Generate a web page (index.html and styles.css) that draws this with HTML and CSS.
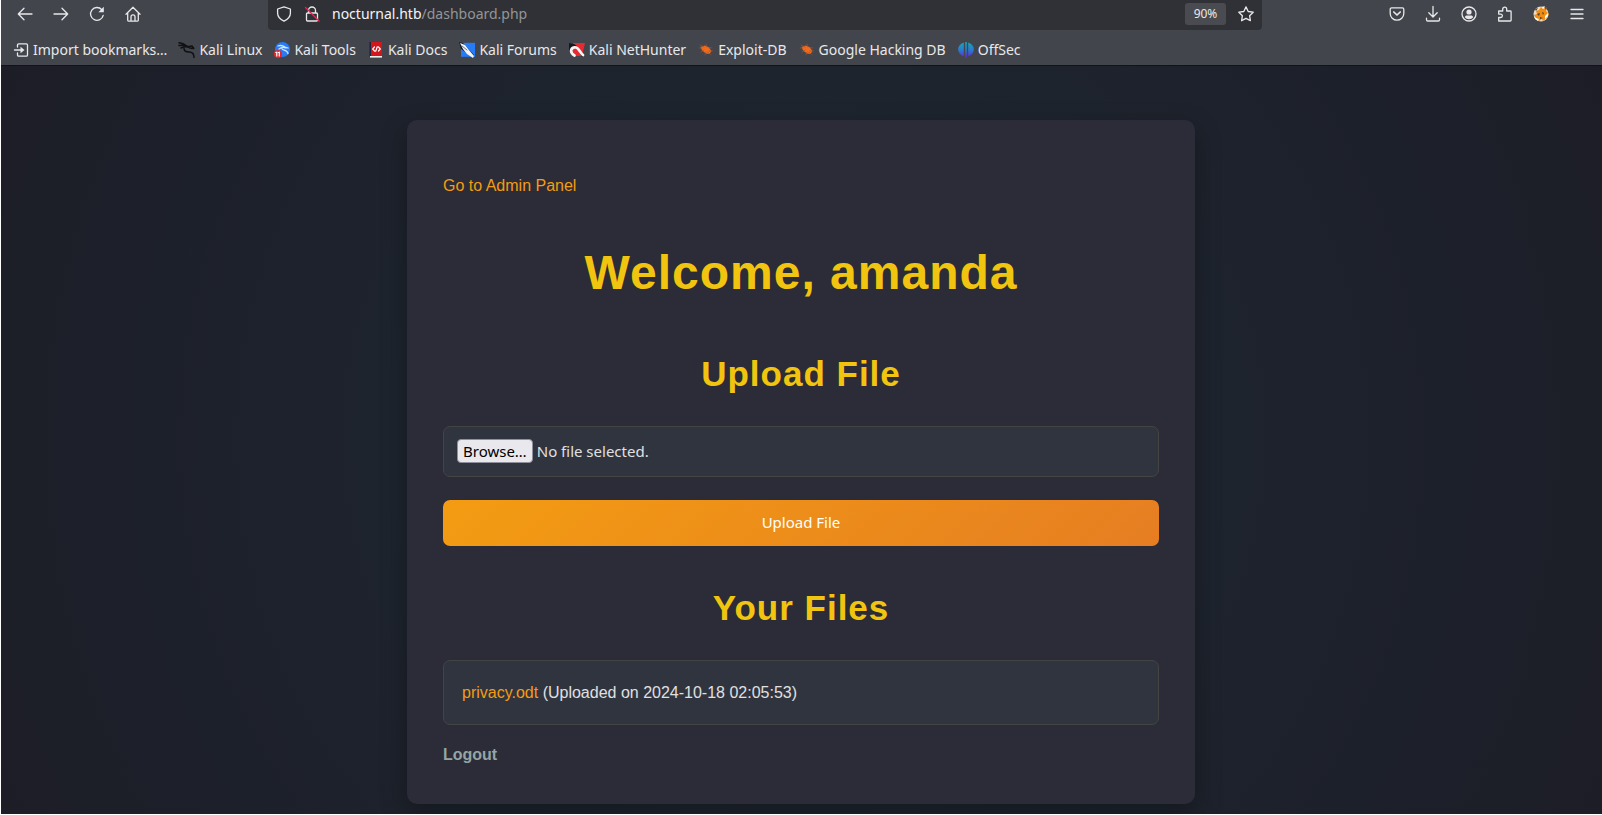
FILE: index.html
```html
<!DOCTYPE html>
<html lang="en">
<head>
<meta charset="utf-8">
<meta name="viewport" content="width=device-width, initial-scale=1">
<title>Dashboard</title>
<link rel="stylesheet" href="styles.css">
</head>
<body class="window">
<header class="chrome">
  <div class="navbar">
    <nav class="nav-buttons" aria-label="Navigation">
      <button class="tool" type="button" aria-label="Back"><svg class="icon" viewBox="0 0 16 16"><path d="M15 8H1.500M7 2.200 1.300 8 7 13.800"/></svg></button>
      <button class="tool" type="button" aria-label="Forward"><svg class="icon" viewBox="0 0 16 16"><path d="M1 8h13.500M9 2.200 14.700 8 9 13.800"/></svg></button>
      <button class="tool" type="button" aria-label="Reload"><svg class="icon" viewBox="0 0 16 16"><path d="M14.200 9.300A6.400 6.400 0 1 1 12.800 3.700"/><path class="solid" d="M14.800.8v5.400H9.400z"/></svg></button>
      <button class="tool" type="button" aria-label="Home"><svg class="icon" viewBox="0 0 16 16"><path d="M1 8.200 8 1.300l7 6.900M2.700 7v7.300c0 .5.300.8.800.8h9c.5 0 .8-.3.800-.8V7M6 15v-4.200a2 2 0 0 1 4 0V15"/></svg></button>
    </nav>
    <div class="urlbar">
      <svg class="icon" viewBox="0 0 16 16"><path d="M8 .9 14.400 3v4.300c0 3.400-2.400 6-6.400 7.900-4-1.900-6.400-4.500-6.400-7.900V3z"/></svg>
      <svg class="icon" viewBox="0 0 16 16"><path d="M4.500 7V4.500a3.500 3.500 0 0 1 7 0V7M3.500 7h9c.6 0 1 .4 1 1v6c0 .6-.4 1-1 1h-9c-.6 0-1-.4-1-1V8c0-.6.400-1 1-1z"/><path class="slash" d="M1.500 1.500 15 15"/></svg>
      <a class="address" href="#"><span class="host">nocturnal.htb</span>/dashboard.php</a>
      <button class="zoom" type="button">90%</button>
      <button class="tool" type="button" aria-label="Bookmark this page"><svg class="icon" viewBox="0 0 16 16"><path d="m8 .9 2.200 4.600 5 .7-3.600 3.500.8 5L8 12.400l-4.400 2.300.8-5L.8 6.200l5-.7z"/></svg></button>
    </div>
    <div class="nav-tools">
      <button class="tool" type="button" aria-label="Save to Pocket"><svg class="icon" viewBox="0 0 16 16"><path d="M2.600 1.800h10.800c.8 0 1.400.6 1.400 1.400v4.200a6.800 6.800 0 0 1-13.600 0V3.200c0-.8.600-1.400 1.400-1.400z"/><path d="m4.800 6 3.200 3 3.200-3" stroke-width="1.700"/></svg></button>
      <button class="tool" type="button" aria-label="Downloads"><svg class="icon" viewBox="0 0 16 16"><path d="M8 .5v10.300M3.800 6.800 8 11l4.200-4.200M1.500 12.200v1.600c0 .7.500 1.200 1.200 1.200h10.600c.7 0 1.200-.5 1.200-1.200v-1.600"/></svg></button>
      <button class="tool" type="button" aria-label="Account"><svg class="icon" viewBox="0 0 16 16"><circle cx="8" cy="8" r="7"/><circle class="solid" cx="8" cy="6" r="2.600"/><path class="solid" d="M3.800 11.300C4 10 5 9.500 6 9.500h4c1 0 2 .5 2.200 1.800-1 1.200-2.400 1.900-4.200 1.900s-3.200-.7-4.200-1.900z"/></svg></button>
      <button class="tool" type="button" aria-label="Extensions"><svg class="icon" viewBox="0 0 16 16"><path d="M1.700 15V11.500h2a1.700 1.700 0 0 0 0-3.400h-2V5h4V3.200a2 2 0 0 1 4 0V5h3.600c.5 0 .8.300.8.800V14.200c0 .5-.3.800-.8.800z"/></svg></button>
      <button class="tool" type="button" aria-label="FoxyProxy"><svg class="icon fill" viewBox="0 0 16 16"><circle cx="8" cy="8" r="7.500" fill="#e8dccb"/><path fill="#f08d13" d="m3 5 3-1 2-3 2 2 4-2-1 4 3 3-2 4-4 3-1-2-3 2-4-3-1-3 3-1z"/><path fill="#50402d" d="m4 8 3-1-1 3zm5-2 2 1-1 2zM7 11l3 1-3 1zM12 2l2-1-1 3zM2 3l3-1-2 3z"/><path fill="#fff" d="m1 10 2 2 3 1-1 2-3-2zM12 10l3-3v3l-3 3zM9 1l3-1-2 3z"/></svg></button>
      <button class="tool" type="button" aria-label="Menu"><svg class="icon" viewBox="0 0 16 16"><path d="M2 3.500h12M2 8h12M2 12.500h12"/></svg></button>
    </div>
  </div>
  <nav class="bookmarks" aria-label="Bookmarks">
    <a class="bookmark" href="#"><svg class="icon" viewBox="0 0 16 16"><path d="M4.500 5V3c0-.7.500-1.200 1.200-1.200h7.600c.7 0 1.200.5 1.200 1.200v10c0 .7-.5 1.200-1.200 1.200H5.700c-.7 0-1.200-.5-1.200-1.200v-2M1.500 8H9"/><path class="solid" d="m7.500 4.800 4 3.200-4 3.200z"/></svg>Import bookmarks…</a>
    <a class="bookmark" href="#"><svg class="icon fill" viewBox="0 0 16 16"><path fill="none" stroke="#101114" stroke-width="1.500" d="M0 .8c3 .4 5 1 7.500 3M0 3.600C3 3 6 3.300 9 4.500M2 6c3-1.700 6-1.500 8.500-.6M5 6.500C5 9.500 7 10 10 10c3.500 0 5 2 5 5.500M9 4.800l4-.8 1.800 2.500-4-.5"/></svg>Kali Linux</a>
    <a class="bookmark" href="#"><svg class="icon fill" viewBox="0 0 16 16"><circle cx="8.500" cy="7.500" r="7.500" fill="#277bf5"/><path fill="none" stroke="#cfe4ff" d="M4 4c3-1 5-.5 7 1M5 7c3-2 4-2 7-1M8 6.500c0 2.500 5 .5 6 5M11 5l3 1"/><circle cx="4" cy="12" r="4" fill="#e5262e"/><path stroke="#fff" stroke-width="1.200" d="M2.800 10v4M5.300 10v4M1.800 10.500h1M4.300 10.500h1"/></svg>Kali Tools</a>
    <a class="bookmark" href="#"><svg class="icon fill" viewBox="0 0 16 16"><path fill="#20233f" d="M1.500 0H4v14.500H1.500z"/><path fill="#d4151b" d="M3 0h11v14H3z"/><path fill="#eee" d="M2 14h12v1.600H2z"/><path fill="none" stroke="#fff" stroke-width="1.200" d="M6.500 5 4.700 7l1.800 2M10.500 5l1.800 2-1.800 2M9.300 4.700 7.700 9.300"/></svg>Kali Docs</a>
    <a class="bookmark" href="#"><svg class="icon fill" viewBox="0 0 16 16"><path fill="#267cf8" d="M2 .8h14v14H2z"/><path fill="#1b1d22" d="m0 0 4 1 11 12-1 2L2 7z"/><path fill="#f3f5f8" d="m1 1 5 2 4 5 5 6-1 2-6-4-4-5z"/><path stroke="#4c5665" stroke-width=".8" d="m3 4 5 4"/></svg>Kali Forums</a>
    <a class="bookmark" href="#"><svg class="icon fill" viewBox="0 0 16 16"><path fill="#e52a30" d="M4 1h12L13 14H3z"/><path fill="#17191d" d="m0 1 5 1 3 2-5 2-3 3zM10 10l5 4-2 1z"/><path fill="none" stroke="#f5f5f5" stroke-width="2.700" d="M5.500 13.500C1 11 1 6 5.500 5.300c4-.6 5 4.700 8.500 7.700"/></svg>Kali NetHunter</a>
    <a class="bookmark" href="#"><svg class="icon fill" viewBox="0 0 16 16"><path fill="#f26a1b" d="m2.500 5 4-1.500 4 1.500 3 4-2 3-3.500-.5-4-3z"/><path fill="none" stroke="#9a5330" stroke-width=".7" d="M1 6h3M2 3l4 2M8 2l1 3M14 6l-3-.5M14.500 9H11M13 12.500l-3-2M7 13l1-3M3 10l3-2"/></svg>Exploit-DB</a>
    <a class="bookmark" href="#"><svg class="icon fill" viewBox="0 0 16 16"><path fill="#f26a1b" d="m2.500 5 4-1.500 4 1.500 3 4-2 3-3.500-.5-4-3z"/><path fill="none" stroke="#9a5330" stroke-width=".7" d="M1 6h3M2 3l4 2M8 2l1 3M14 6l-3-.5M14.500 9H11M13 12.500l-3-2M7 13l1-3M3 10l3-2"/></svg>Google Hacking DB</a>
    <a class="bookmark" href="#"><svg class="icon fill" viewBox="0 0 16 16"><defs><linearGradient id="offsec" x2="0" y2="1"><stop stop-color="#18a8b8"/><stop offset=".5" stop-color="#287bd0"/><stop offset="1" stop-color="#6c20d8"/></linearGradient></defs><path fill="url(#offsec)" d="M5.800.5v13.800C-1.500 12-2 3 5.800.5zM10.200.5v13.800C17.500 12 18 3 10.200.5zM7.200 0h1.600v16H7.200z"/></svg>OffSec</a>
  </nav>
</header>
<main class="page">
  <section class="card">
    <p class="admin"><a class="link" href="#">Go to Admin Panel</a></p>
    <h1 class="title">Welcome, amanda</h1>
    <h2 class="subtitle">Upload File</h2>
    <form class="upload">
      <label class="file-field">
        <input class="file-input" type="file" name="fileToUpload">
        <span class="browse">Browse…</span>
        <span>No file selected.</span>
      </label>
      <button class="submit" type="submit">Upload File</button>
    </form>
    <h2 class="subtitle">Your Files</h2>
    <ul class="files">
      <li class="file"><a class="link" href="#">privacy.odt</a> (Uploaded on 2024-10-18 02:05:53)</li>
    </ul>
    <a class="logout" href="#">Logout</a>
  </section>
</main>
</body>
</html>
```
FILE: styles.css
```css
* { box-sizing: border-box; }

.window {
  margin: 0;
  min-height: 100vh;
  display: flex;
  flex-direction: column;
  border-left: 1px solid #fff;
  border-bottom: 1px solid #fff;
  background: #1c1e28;
  color: #e0e0e0;
  font: 16px/26px "Liberation Sans", Arial, sans-serif;
}

a { color: inherit; text-decoration: none; }

button { border: 0; padding: 0; background: none; color: inherit; font: inherit; cursor: pointer; }

/* Browser toolbar */
.chrome {
  background: #42454c;
  border-bottom: 1px solid #121318;
  color: #e8e8ea;
  font: 14px/20px "Noto Sans", "Open Sans", sans-serif;
}

.navbar {
  display: grid;
  grid-template-columns: 267px minmax(0, 1fr) 340px;
  height: 30px;
}

.nav-buttons, .nav-tools { display: flex; align-items: center; gap: 20px; padding-bottom: 2px; }
.nav-buttons { padding-left: 16px; }
.nav-tools { justify-content: flex-end; padding-right: 17px; }

.tool { display: flex; }

.icon {
  flex: none;
  width: 16px;
  height: 16px;
  fill: none;
  stroke: #e8e8ea;
  stroke-width: 1.3;
  stroke-linecap: round;
  stroke-linejoin: round;
  overflow: visible;
}
.icon.fill { stroke: none; }
.solid { fill: #e8e8ea; stroke: none; }
.slash { stroke: #e22850; }

.urlbar {
  display: flex;
  align-items: center;
  gap: 12px;
  padding: 0 8px 2px;
  background: #303136;
  border-radius: 0 0 4px 4px;
}
.address { flex: 1; min-width: 0; color: #949599; white-space: nowrap; }
.host { color: #f4f4f6; }
.zoom {
  width: 41px;
  height: 22px;
  border-radius: 3px;
  background: #4a4b50;
  font-size: 12px;
}

.bookmarks {
  display: flex;
  align-items: center;
  gap: 12px;
  height: 35px;
  padding: 4px 12px 0;
  white-space: nowrap;
}
.bookmark { display: flex; align-items: center; gap: 4px; }

/* Dashboard page */
.page {
  flex: 1;
  padding: 54px 17px 10px 16px;
  background: radial-gradient(circle farthest-corner at center, #1f2933, #1c1d27);
}

.card {
  max-width: 788px;
  margin: 0 auto;
  padding: 36px;
  border-radius: 10px;
  background: #2b2c37;
  box-shadow: 0 9px 27px rgba(0, 0, 0, 0.3);
}

.admin { margin: 17px 0 36px; }
.link { color: #f39c12; }

.title, .subtitle {
  color: #f1c40f;
  text-align: center;
  letter-spacing: 1px;
}
.title { margin: 0 0 35px; font-size: 48px; line-height: 76px; }
.subtitle { margin: 0 0 24px; font-size: 35px; line-height: 56px; }

.upload {
  display: grid;
  gap: 23px;
  margin-bottom: 34px;
  font: 15px/20px "Noto Sans", "Open Sans", sans-serif;
}

.file-field {
  position: relative;
  display: flex;
  align-items: center;
  gap: 4px;
  height: 51px;
  padding: 0 13px 2px;
  border: 1px solid #444;
  border-radius: 7px;
  background: #30343f;
}
.file-input { position: absolute; inset: 0; width: 100%; opacity: 0; cursor: pointer; }
.browse {
  padding: 1px 5px;
  border: 1px solid #8f8f9d;
  border-radius: 4px;
  background: #e9e9ed;
  color: #000;
}

.submit {
  height: 46px;
  padding-bottom: 2px;
  border-radius: 7px;
  background: linear-gradient(135deg, #f39c12, #e67e22);
  color: #fff;
}

.files { margin: 0 0 17px; padding: 0; list-style: none; }
.file {
  padding: 19px 18px 18px;
  border: 1px solid #444;
  border-radius: 7px;
  background: #30343f;
}

.logout { display: inline-block; color: #95a5a6; font-weight: bold; }
```
